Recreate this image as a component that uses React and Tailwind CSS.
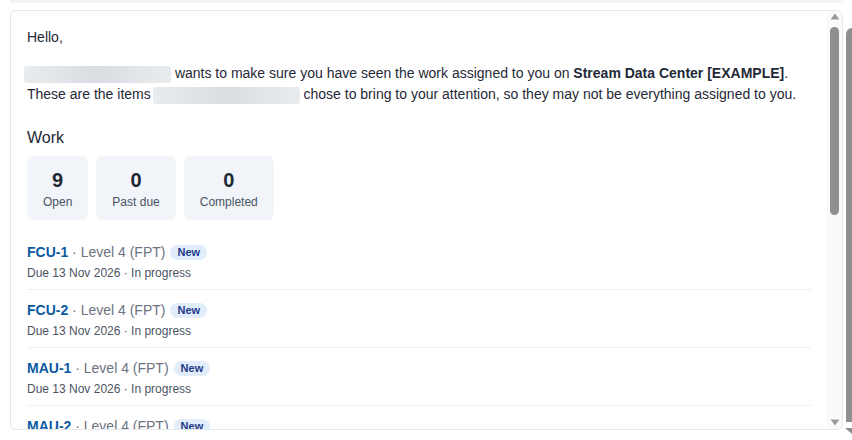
import React from 'react'

const items = [
  { id: 'FCU-1' },
  { id: 'FCU-2' },
  { id: 'MAU-1' },
  { id: 'MAU-2' },
  { id: 'MAU-3' },
  { id: 'PDU-1' },
  { id: 'PDU-2' },
  { id: 'UPS-1' },
  { id: 'UPS-2' },
]

const stats = [
  { value: 9, label: 'Open' },
  { value: 0, label: 'Past due' },
  { value: 0, label: 'Completed' },
]

function Redacted() {
  return (
    <span className="inline-block h-[17px] w-[147px] rounded-[3px] bg-gradient-to-r from-[#e9ecef] via-[#d9dde2] to-[#e9ecef] align-middle blur-[0.6px]" />
  )
}

function Arrow({ up }) {
  return (
    <svg width="10" height="7" viewBox="0 0 10 7">
      <path d={up ? 'M5 0.5 L9.5 6.5 L0.5 6.5 Z' : 'M0.5 0.5 L9.5 0.5 L5 6.5 Z'} fill="#9a9a9a" />
    </svg>
  )
}

export default function App() {
  return (
    <div
      className="flex h-[440px] w-[852px] overflow-hidden bg-white"
      style={{ fontFamily: '"Liberation Sans", Arial, sans-serif' }}
    >
      <div className="flex min-w-0 flex-1 flex-col pl-[10px]">
        <div className="h-[3px] bg-[#f4f5f6]" />
        <div className="mt-[7px] flex h-[420px] overflow-hidden rounded-[6px] border border-[#e6e8eb] bg-white">
          <div className="min-w-0 flex-1 overflow-hidden p-4 text-[14px] leading-[21px] text-[#1f2937]">
            <p>Hello,</p>
            <p className="mt-[15px]">
              <span className="-ml-[3px]">
                <Redacted />
              </span>{' '}
              wants to make sure you have seen the work assigned to you on{' '}
              <strong className="font-bold">Stream Data Center [EXAMPLE]</strong>.
              <br />
              These are the items <span className="-ml-[2px]"><Redacted /></span> chose to bring to your
              attention, so they may not be everything assigned to you.
            </p>

            <h2 className="mt-[21px] text-[16px] leading-[24px] text-[#1f2937]">Work</h2>
            <div className="mt-[6px] flex gap-2">
              {stats.map((s) => (
                <div key={s.label} className="rounded-[6px] bg-[#f1f4f8] px-4 py-2.5 text-center">
                  <div className="text-[20px] font-bold leading-[28px] text-[#1f2937]">{s.value}</div>
                  <div className="text-[12px] leading-4 text-[#4b5563]">{s.label}</div>
                </div>
              ))}
            </div>

            <div className="mt-[12px]">
              {items.map((it) => (
                <div key={it.id} className="border-b border-[#eef0f2] pb-[8px] pt-[10px]">
                  <div className="flex h-[20px] items-center">
                    <span className="font-bold text-[#0b5aa2]">{it.id}</span>
                    <span className="whitespace-pre text-[#6b7280]"> · Level 4 (FPT)</span>
                    <span className="ml-[5px] rounded-full bg-[#e1edfb] px-[7px] text-[11px] font-bold leading-[15px] text-[#1e3a8a]">
                      New
                    </span>
                  </div>
                  <div className="mt-[3px] text-[12px] leading-4 text-[#4b5563]">
                    Due 13 Nov 2026 · In progress
                  </div>
                </div>
              ))}
            </div>
          </div>

          {/* card scrollbar */}
          <div className="flex w-[15px] shrink-0 flex-col items-center bg-[#fafafa] pb-[3px] pt-[2px]">
            <Arrow up />
            <div className="mt-[7px] h-[188px] w-[9px] rounded-full bg-[#8f8f8f]" />
            <div className="flex-1" />
            <Arrow />
          </div>
        </div>
      </div>

      {/* page scrollbar fragment on the right edge */}
      <div className="flex w-[9px] flex-col items-end">
        <div className="mt-[28px] h-[394px] w-[6px] rounded-tl-full bg-[#8f8f8f]" />
        <svg width="9" height="8" viewBox="0 0 9 8" className="mt-[5px]">
          <path d="M2 1 L9 1 L9 7 Z" fill="#8f8f8f" />
        </svg>
      </div>
    </div>
  )
}
